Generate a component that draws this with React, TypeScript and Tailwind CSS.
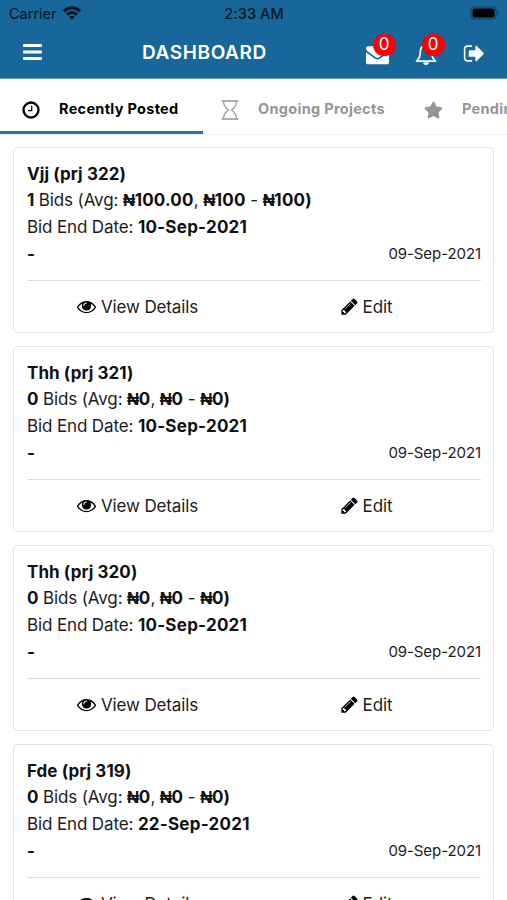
import React from "react"
import { FaStar } from "react-icons/fa"

type Project = {
    id: number
    name: string
    bids: number
    avg: string
    min: string
    max: string
    endDate: string
    posted: string
}

const projects: Project[] = [
    { id: 322, name: "Vjj", bids: 1, avg: "100.00", min: "100", max: "100", endDate: "10-Sep-2021", posted: "09-Sep-2021" },
    { id: 321, name: "Thh", bids: 0, avg: "0", min: "0", max: "0", endDate: "10-Sep-2021", posted: "09-Sep-2021" },
    { id: 320, name: "Thh", bids: 0, avg: "0", min: "0", max: "0", endDate: "10-Sep-2021", posted: "09-Sep-2021" },
    { id: 319, name: "Fde", bids: 0, avg: "0", min: "0", max: "0", endDate: "22-Sep-2021", posted: "09-Sep-2021" },
]

const Glyph = ({ d, className }: { d: string, className: string }) => (
    <svg viewBox="0 0 1792 1792" fill="currentColor" className={className}><path d={d} /></svg>
)

const EYE = "M1664 960q-152-236-381-353 61 104 61 225 0 185-131.5 316.5t-316.5 131.5-316.5-131.5-131.5-316.5q0-121 61-225-229 117-381 353 133 205 333.5 326.5t434.5 121.5 434.5-121.5 333.5-326.5zm-720-384q0-20-14-34t-34-14q-125 0-214.5 89.5t-89.5 214.5q0 20 14 34t34 14 34-14 14-34q0-86 61-147t147-61q20 0 34-14t14-34zm848 384q0 34-20 69-140 230-376.5 368.5t-499.5 138.5-499.5-139-376.5-368q-20-35-20-69t20-69q140-229 376.5-368t499.5-139 499.5 139 376.5 368q20 35 20 69z"
const PENCIL = "M491 1536l91-91-235-235-91 91v107h128v128h107zm523-928q0-22-22-22-10 0-17 7l-542 542q-7 7-7 17 0 22 22 22 10 0 17-7l542-542q7-7 7-17zm-54-192l416 416-832 832h-416v-416zm683 96q0 53-37 90l-166 166-416-416 166-165q36-38 90-38 53 0 91 38l235 234q37 39 37 91z"
const ENVELOPE = "M1792 710v794q0 66-47 113t-113 47h-1472q-66 0-113-47t-47-113v-794q44 49 101 87 362 246 497 345 57 42 92.5 65.5t94.5 48 110 24.5h2q51 0 110-24.5t94.5-48 92.5-65.5q170-123 498-345 57-39 100-87zm0-294q0 79-49 151t-122 123q-376 261-468 325-10 7-42.5 31t-54 38.5-52 32.5-57.5 27-50 9h-2q-23 0-50-9t-57.5-27-52-32.5-54-38.5-42.5-31q-91-64-262-182.5t-205-142.5q-62-42-117-115.5t-55-136.5q0-78 41.5-130t118.5-52h1472q65 0 112.5 47t47.5 113z"
const SIGN_OUT = "M704 1440q0 4 1 20t.5 26.5-3 23.5-10 19.5-20.5 6.5h-320q-119 0-203.5-84.5t-84.5-203.5v-704q0-119 84.5-203.5t203.5-84.5h320q13 0 22.5 9.5t9.5 22.5q0 4 1 20t.5 26.5-3 23.5-10 19.5-20.5 6.5h-320q-66 0-113 47t-47 113v704q0 66 47 113t113 47h312l11.5 1 11.5 3 8 5.5 7 9 2 13.5zm928-544q0 26-19 45l-544 544q-19 19-45 19t-45-19-19-45v-288h-448q-26 0-45-19t-19-45v-384q0-26 19-45t45-19h448v-288q0-26 19-45t45-19 45 19l544 544q19 19 19 45z"

const Badge = () => (
    <span className="absolute -top-[9px] left-[6.500px] flex h-[22px] w-[23px] items-center justify-center rounded-full bg-[#fb0007] text-[17px] leading-none text-white">0</span>
)

const StatusBar = () => (
    <div className="grid h-[27px] grid-cols-3 items-center pl-[9px] pr-[7px] text-[14.5px] text-[#06151f]">
        <div className="flex items-center gap-[6px]">
            <span>Carrier</span>
            <svg viewBox="0 0 18 14" className="-mt-px h-[14px] w-[18px]" fill="none" stroke="currentColor" strokeWidth="3">
                <path d="M1 5.2C5.6.6 12.4.6 17 5.2" />
                <path d="M4 8.7c2.9-2.8 7.1-2.8 10 0" />
                <path d="M9 13.5l-2.7-2.6c1.6-1.4 3.8-1.4 5.4 0z" fill="currentColor" stroke="none" />
            </svg>
        </div>
        <span className="pr-px text-center font-medium tracking-[0.1px]">2:33 AM</span>
        <svg viewBox="0 0 30 14" className="-mt-px h-[14px] w-[30px] justify-self-end">
            <rect x="1" y="1" width="25" height="12" rx="3.5" fill="none" stroke="#0f4263" strokeWidth="1.2" />
            <rect x="2.5" y="2.5" width="22" height="9" rx="2" fill="#000" />
            <path d="M27.5 5v4c1.6-.6 1.6-3.4 0-4z" fill="#0f4263" />
        </svg>
    </div>
)

const Header = () => (
    <div className="flex h-[51px] items-center pl-[23px] text-white">
        <svg viewBox="0 0 19 16" className="-mt-px h-4 w-[19px]" fill="currentColor">
            <rect width="19" height="3" rx="1" />
            <rect y="6.5" width="19" height="3" rx="1" />
            <rect y="13" width="19" height="3" rx="1" />
        </svg>
        <h1 className="ml-[100px] mt-[2px] w-[224px] text-[19px] font-semibold tracking-[0.6px]">DASHBOARD</h1>
        <div className="relative mt-[3px]">
            <Glyph d={ENVELOPE} className="h-[23px] w-[23px]" />
            <Badge />
        </div>
        <div className="relative ml-[26px] mt-[3px]">
            <svg viewBox="0 0 22 23" className="h-[23px] w-[22px]" fill="none" stroke="currentColor" strokeWidth="1.7" strokeLinejoin="round">
                <path d="M11 2.5C7 2.5 5.3 5.4 5.3 9c0 4.500-1.300 7-3.800 9.200h19C18 16 16.700 13.500 16.700 9c0-3.600-1.700-6.500-5.700-6.500z" />
                <path d="M8.200 19.200a2.800 2.800 0 0 0 5.600 0z" fill="currentColor" stroke="none" />
            </svg>
            <Badge />
        </div>
        <Glyph d={SIGN_OUT} className="ml-[26px] mt-[2px] h-[23px] w-[23px]" />
    </div>
)

const Tabs = () => (
    <div className="flex h-[56px] overflow-hidden border-b border-[#efefef] text-[14.5px] font-bold tracking-[0.3px] whitespace-nowrap text-[#959595]">
        <div className="flex w-[203px] shrink-0 items-center border-b-[3px] border-[#2a75a0] pl-[22px] text-black">
            <svg viewBox="0 0 18 18" className="mt-[9px] h-[18px] w-[18px]" fill="none" stroke="currentColor">
                <circle cx="9" cy="9" r="7.500" strokeWidth="2.300" />
                <path d="M9.700 4.800v4.900H6" strokeWidth="1.300" />
            </svg>
            <span className="ml-[19px] mt-[8px]">Recently Posted</span>
        </div>
        <div className="flex w-[203px] shrink-0 items-center pb-[3px] pl-[18px]">
            <svg viewBox="0 0 18 20" className="mt-[9px] h-[20px] w-[18px]" fill="none" stroke="currentColor">
                <path d="M.5 1h17M.5 19h17" strokeWidth="1.400" />
                <path d="M2.500 1C2.500 6 4.500 8 7.500 10 4.500 12 2.500 14 2.500 19M15.500 1c0 5-2 7-5 9 3 2 5 4 5 9" strokeWidth="1.200" />
            </svg>
            <span className="ml-[19px] mt-[8px]">Ongoing Projects</span>
        </div>
        <div className="flex w-[220px] shrink-0 items-center pb-[3px] pl-[18px]">
            <FaStar className="mt-[9px] h-[18px] w-[19px]" />
            <span className="ml-[19px] mt-[8px]">Pending Projects</span>
        </div>
    </div>
)

const Naira = ({ value }: { value: string }) => (
    <b className="font-bold tracking-[0.2px] text-[#111]"><span className="mr-[-0.8px] font-['Liberation_Sans',sans-serif] leading-none">₦</span>{value}</b>
)

const ProjectCard = ({ p }: { p: Project }) => (
    <div className="h-[186px] shrink-0 rounded-[5px] border-[1.500px] border-[#e4e4e4] pl-[13px] pr-[12px] pt-[12px] text-[17px] leading-[27px] tracking-[-0.13px] text-[#1c1c1c]">
        <div className="relative top-[0.5px] font-bold tracking-[0.08px] text-[#111]">{p.name} (prj {p.id})</div>
        <div>
            <b className="font-bold text-[#111]">{p.bids}</b> Bids (Avg: <Naira value={p.avg} />, <Naira value={p.min} /> - <Naira value={p.max + ")"} />
        </div>
        <div>Bid End Date: <b className="font-bold tracking-[0.25px] text-[#111]">{p.endDate}</b></div>
        <div className="flex justify-between">
            <b className="font-bold text-[#111]">-</b>
            <span className="-mt-px text-[15px] tracking-[-0.08px]">{p.posted}</span>
        </div>
        <div className="mt-[12px] grid grid-cols-2 border-t border-[#dedede] pt-[13px]">
            <div className="flex items-center justify-center pr-[6px]">
                <Glyph d={EYE} className="-mt-[2px] mr-[5px] h-[19px] w-[19px] text-black" />View Details
            </div>
            <div className="flex items-center justify-center pr-[3px]">
                <Glyph d={PENCIL} className="-mt-[2px] mr-[4px] h-[19px] w-[19px] text-black" />Edit
            </div>
        </div>
    </div>
)

const App = () => {
    return (
        <div className="flex h-[900px] w-[507px] flex-col overflow-hidden bg-white font-['Inter',sans-serif]">
            <div className="shrink-0 border-b border-[#6d9cc4] bg-[#17679a]">
                <StatusBar />
                <Header />
            </div>
            <div className="shrink-0"><Tabs /></div>
            <div className="flex min-h-0 flex-1 flex-col gap-[13px] overflow-hidden px-[13px] pt-[12px]">
                {projects.map((p) => <ProjectCard key={p.id} p={p} />)}
            </div>
        </div>
    )
}

export default App
